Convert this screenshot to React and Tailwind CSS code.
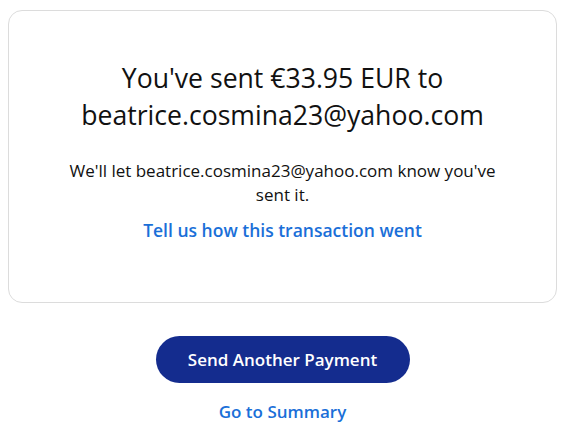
import React from "react";

const App = () => {
  return (
    <div className="min-h-screen bg-white pt-[10px] pl-2 font-['Open_Sans',sans-serif]">
      {/* Confirmation card */}
      <div className="w-[549px] h-[293px] rounded-[14px] border border-[#dcdcdc] pt-[49px] text-center">
        <h1 className="text-[26.6px] leading-[37px] text-[#111111] font-normal">
          You've sent €33.95 EUR to
          <br />
          beatrice.cosmina23@yahoo.com
        </h1>
        <p className="mt-[25px] text-[17px] leading-[24px] text-[#111111] px-14">
          We'll let beatrice.cosmina23@yahoo.com know you've sent it.
        </p>
        <a href="#" className="mt-[11px] block text-[17.5px] leading-[24px] font-semibold text-[#1a6fd8]">
          Tell us how this transaction went
        </a>
      </div>

      {/* Actions */}
      <div className="w-[549px] flex flex-col items-center">
        <button className="mt-[33px] w-[254px] h-[47px] rounded-full bg-[#142c8e] text-white text-[17px] font-semibold">
          Send Another Payment
        </button>
        <a href="#" className="mt-[17px] text-[17px] leading-[24px] font-semibold text-[#1a6fd8]">
          Go to Summary
        </a>
      </div>
    </div>
  );
};

export default App;
